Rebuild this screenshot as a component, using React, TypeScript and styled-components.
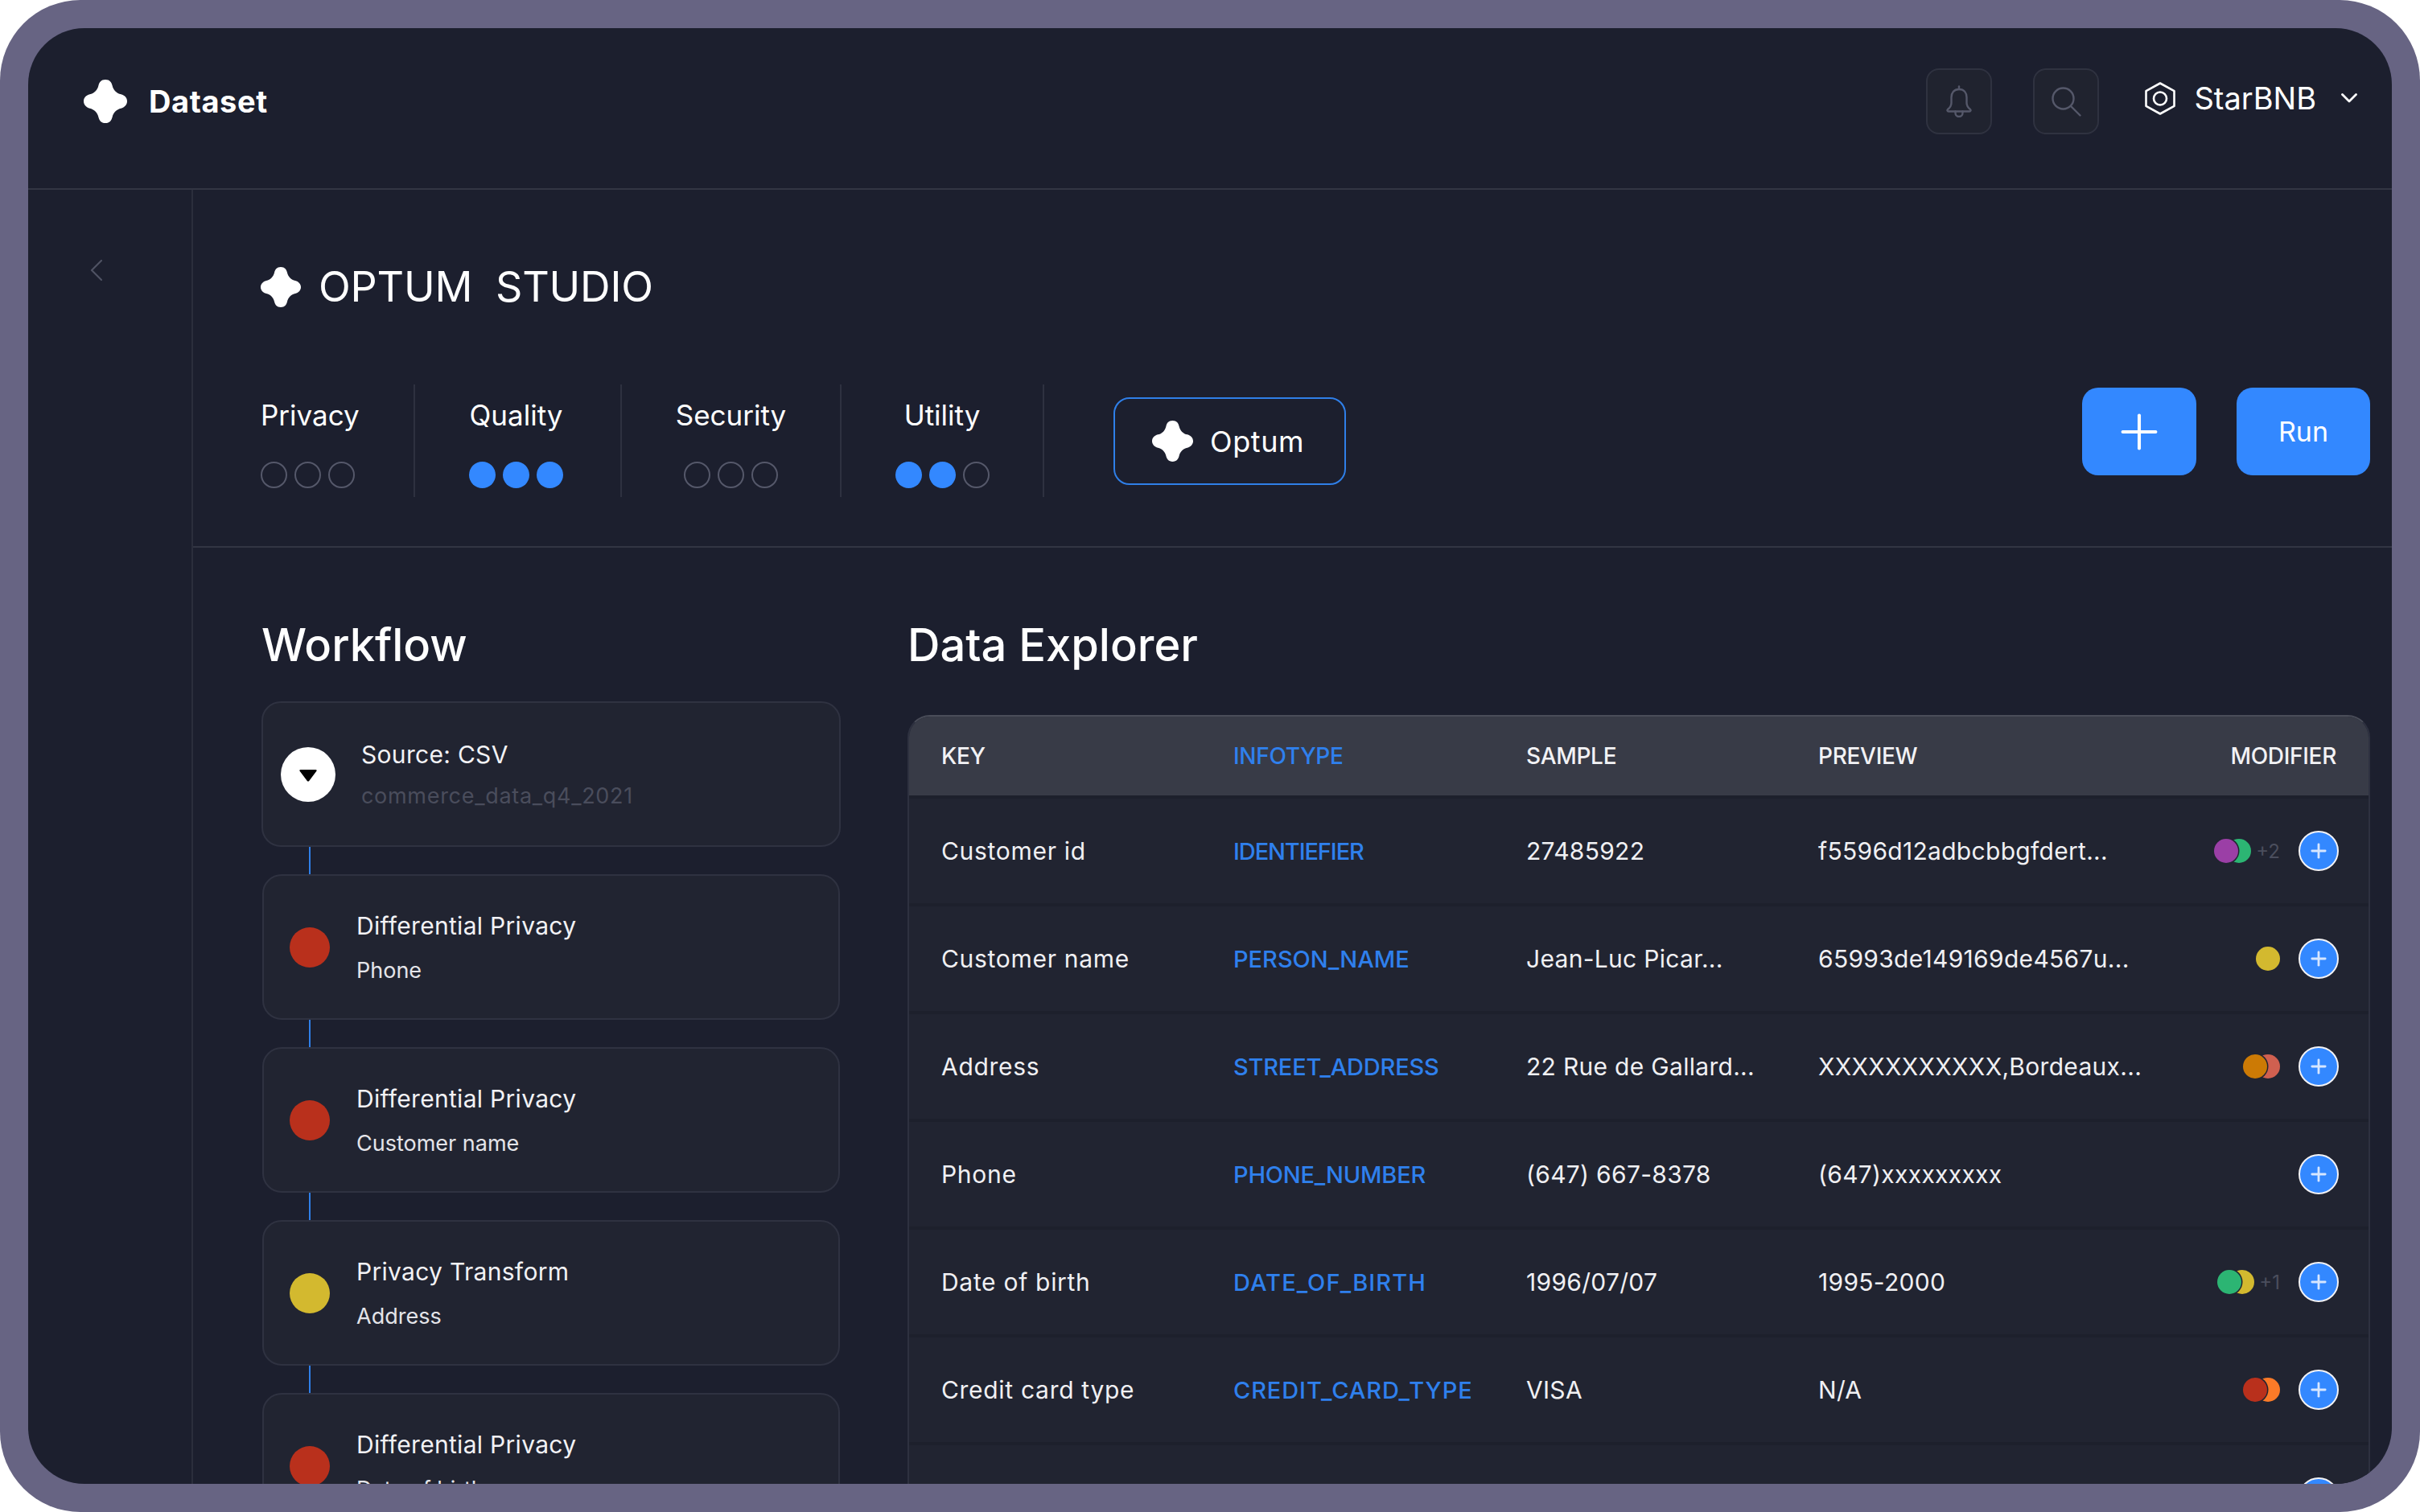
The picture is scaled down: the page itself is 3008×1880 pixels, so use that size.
import styled, { createGlobalStyle } from 'styled-components';
import { Plus } from 'lucide-react';

const GlobalStyle = createGlobalStyle`
  html, body {
    margin: 0;
    padding: 0;
    background: #ffffff;
  }
  * {
    box-sizing: border-box;
  }
`;

const StarMark = ({ size }: { size: number }) => (
  <StarSvg width={size} height={size} viewBox="0 0 100 100">
    <path
      d="M50 0C60 0 64 6 66 14C68 24 76 32 86 34C94 36 100 42 100 50C100 58 94 64 86 66C76 68 68 76 66 86C64 94 60 100 50 100C40 100 36 94 34 86C32 76 24 68 14 66C6 64 0 58 0 50C0 42 6 36 14 34C24 32 32 24 34 14C36 6 40 0 50 0Z"
      fill="#ffffff"
    />
  </StarSvg>
);

const BellIcon = () => (
  <svg width="32" height="40" viewBox="0 0 32 40" fill="none" stroke="#55586a" strokeWidth="2.4" strokeLinejoin="round" strokeLinecap="round">
    <path d="M16 1.5V5" />
    <path d="M16 5C9.5 5 6.5 9.5 6.5 15V22C6.5 26 4.5 28 2 30C1 31 1.5 32.5 3 32.5H29C30.5 32.5 31 31 30 30C27.5 28 25.5 26 25.5 22V15C25.5 9.5 22.5 5 16 5Z" />
    <path d="M11.5 32.5V34.5C11.5 37 13.5 39 16 39C18.5 39 20.5 37 20.5 34.5V32.5" />
  </svg>
);

const SearchIcon = () => (
  <svg width="37" height="37" viewBox="0 0 37 37" fill="none" stroke="#55586a" strokeWidth="2.4" strokeLinecap="round">
    <circle cx="14.5" cy="14.5" r="13" />
    <path d="M24 24L35.5 35.5" />
  </svg>
);

const HexIcon = () => (
  <svg width="38" height="41" viewBox="0 0 38 41" fill="none" stroke="#ffffff" strokeWidth="2.6" strokeLinejoin="round">
    <path d="M19 1.5L36.5 11.2V29.8L19 39.5L1.5 29.8V11.2Z" />
    <circle cx="19" cy="20.5" r="8" />
  </svg>
);

const DownChevron = () => (
  <svg width="20" height="12" viewBox="0 0 20 12" fill="none" stroke="#ffffff" strokeWidth="2.8" strokeLinecap="round" strokeLinejoin="round">
    <path d="M1.5 1.5L10 10L18.5 1.5" />
  </svg>
);

const BackChevron = () => (
  <svg width="15" height="26" viewBox="0 0 15 26" fill="none" stroke="#4f5263" strokeWidth="2.2" strokeLinecap="round" strokeLinejoin="round">
    <path d="M14 1L2 13L14 25" />
  </svg>
);

const metrics = [
  { label: 'Privacy', filled: 0, width: 192, start: true, pad: 0 },
  { label: 'Quality', filled: 3, width: 257, start: false, pad: 4 },
  { label: 'Security', filled: 0, width: 273, start: false, pad: 0 },
  { label: 'Utility', filled: 2, width: 252, start: false, pad: 0 },
];

const steps = [
  { title: 'Differential Privacy', sub: 'Phone', color: '#b9301c' },
  { title: 'Differential Privacy', sub: 'Customer name', color: '#b9301c' },
  { title: 'Privacy Transform', sub: 'Address', color: '#d3b92f' },
  { title: 'Differential Privacy', sub: 'Date of birth', color: '#b9301c' },
];

const rows = [
  { key: 'Customer id', type: 'IDENTIEFIER', tracking: -1.1, sample: '27485922', preview: 'f5596d12adbcbbgfdert...', dots: ['#9b3fa6', '#2cb573'], more: '+2' },
  { key: 'Customer name', type: 'PERSON_NAME', tracking: 0, sample: 'Jean-Luc Picar...', preview: '65993de149169de4567u...', dots: ['#d3b92f'], more: '' },
  { key: 'Address', type: 'STREET_ADDRESS', tracking: -0.2, sample: '22 Rue de Gallard...', preview: 'XXXXXXXXXXX,Bordeaux...', dots: ['#cc7a05', '#d06050'], more: '' },
  { key: 'Phone', type: 'PHONE_NUMBER', tracking: -0.2, sample: '(647) 667-8378', preview: '(647)xxxxxxxxx', dots: [], more: '' },
  { key: 'Date of birth', type: 'DATE_OF_BIRTH', tracking: 1.1, sample: '1996/07/07', preview: '1995-2000', dots: ['#2cb573', '#d3b92f'], more: '+1' },
  { key: 'Credit card type', type: 'CREDIT_CARD_TYPE', tracking: 0.9, sample: 'VISA', preview: 'N/A', dots: ['#b9301c', '#fa7a28'], more: '' },
  { key: '', type: '', tracking: 0, sample: '', preview: '', dots: [], more: '' },
];

const App = () => {
  return (
    <>
      <GlobalStyle />
      <Frame>
        <Screen>
          <TopBar>
            <Brand>
              <StarMark size={54} />
              <BrandName>Dataset</BrandName>
            </Brand>
            <TopActions>
              <IconButton>
                <BellIcon />
              </IconButton>
              <IconButton>
                <SearchIcon />
              </IconButton>
              <OrgSwitch>
                <HexIcon />
                <OrgName>StarBNB</OrgName>
                <DownChevron />
              </OrgSwitch>
            </TopActions>
          </TopBar>
          <Body>
            <Rail>
              <BackChevron />
            </Rail>
            <Main>
              <TitleRow>
                <StarMark size={50} />
                <Title>OPTUM&nbsp; STUDIO</Title>
              </TitleRow>
              <MetricBar>
                {metrics.map((m) => (
                  <Metric key={m.label} $width={m.width} $start={m.start} $pad={m.pad}>
                    <MetricLabel>{m.label}</MetricLabel>
                    <DotRow>
                      {[0, 1, 2].map((i) => (
                        <ScoreDot key={i} $on={i < m.filled} />
                      ))}
                    </DotRow>
                  </Metric>
                ))}
                <OptumButton>
                  <StarMark size={51} />
                  <span>Optum</span>
                </OptumButton>
                <RunActions>
                  <PrimaryButton $width={142}>
                    <Plus size={70} color="#ffffff" strokeWidth={1.4} />
                  </PrimaryButton>
                  <PrimaryButton $width={166}>Run</PrimaryButton>
                </RunActions>
              </MetricBar>
              <Panels>
                <WorkflowPanel>
                  <Heading $gap={40}>Workflow</Heading>
                  <SourceCard>
                    <SourceBadge>
                      <svg width="22" height="15" viewBox="0 0 22 15">
                        <path d="M1.5 0H20.5C21.5 0 22 1 21.4 1.8L12.2 14C11.6 14.8 10.4 14.8 9.8 14L0.6 1.8C0 1 0.5 0 1.5 0Z" fill="#000000" />
                      </svg>
                    </SourceBadge>
                    <CardText $gap={18}>
                      <CardTitle>Source: CSV</CardTitle>
                      <CardSub $muted>commerce_data_q4_2021</CardSub>
                    </CardText>
                  </SourceCard>
                  {steps.map((s, i) => (
                    <div key={i}>
                      <Connector />
                      <StepCard>
                        <StepDot $color={s.color} />
                        <CardText $gap={22}>
                          <CardTitle>{s.title}</CardTitle>
                          <CardSub>{s.sub}</CardSub>
                        </CardText>
                      </StepCard>
                    </div>
                  ))}
                </WorkflowPanel>
                <ExplorerPanel>
                  <Heading $gap={57}>Data Explorer</Heading>
                  <Table>
                    <HeaderRow>
                      <HeadCell>KEY</HeadCell>
                      <HeadCell $accent>INFOTYPE</HeadCell>
                      <HeadCell>SAMPLE</HeadCell>
                      <HeadCell>PREVIEW</HeadCell>
                      <HeadCell>MODIFIER</HeadCell>
                    </HeaderRow>
                    {rows.map((r, i) => (
                      <DataRow key={i}>
                        <KeyCell>{r.key}</KeyCell>
                        <TypeCell $tracking={r.tracking}>{r.type}</TypeCell>
                        <Cell>{r.sample}</Cell>
                        <Cell>{r.preview}</Cell>
                        <ModifierCell>
                          {r.dots.length > 0 && (
                            <DotStack>
                              {r.dots.map((c, j) => (
                                <ModifierDot key={c} $color={c} $front={j === 0 && r.dots.length > 1} />
                              ))}
                            </DotStack>
                          )}
                          {r.more && <MoreCount>{r.more}</MoreCount>}
                          <AddButton>
                            <Plus size={28} color="#d6e6ff" strokeWidth={2.4} />
                          </AddButton>
                        </ModifierCell>
                      </DataRow>
                    ))}
                  </Table>
                </ExplorerPanel>
              </Panels>
            </Main>
          </Body>
        </Screen>
      </Frame>
    </>
  );
};

const Frame = styled.div`
  width: 3008px;
  height: 1880px;
  padding: 35px;
  background-color: #676483;
  border-radius: 100px;
  font-family: Inter, 'Liberation Sans', sans-serif;
  color: #ffffff;
`;

const Screen = styled.div`
  display: flex;
  flex-direction: column;
  height: 100%;
  background-color: #1c1f2e;
  border-radius: 70px;
  overflow: hidden;
`;

const TopBar = styled.header`
  display: flex;
  flex: none;
  align-items: center;
  justify-content: space-between;
  height: 201px;
  padding: 0 43px 17px 69px;
  border-bottom: 2px solid #323543;
`;

const Brand = styled.div`
  display: flex;
  align-items: center;
  gap: 27px;
`;

const StarSvg = styled.svg`
  display: block;
  flex: none;
`;

const BrandName = styled.span`
  font-size: 38px;
  font-weight: 700;
  letter-spacing: 0.6px;
`;

const TopActions = styled.div`
  display: flex;
  align-items: center;
  gap: 51px;
`;

const IconButton = styled.div`
  display: flex;
  align-items: center;
  justify-content: center;
  width: 82px;
  height: 82px;
  background-color: #20232f;
  border: 2px solid #2f3240;
  border-radius: 16px;
`;

const OrgSwitch = styled.div`
  display: flex;
  align-items: center;
  gap: 23px;
  margin-left: 6px;
  padding-bottom: 8px;

  svg:last-child {
    margin-left: 8px;
  }
`;

const OrgName = styled.span`
  font-size: 38px;
  font-weight: 400;
`;

const Body = styled.div`
  display: flex;
  flex: 1;
  min-height: 0;
`;

const Rail = styled.aside`
  flex: none;
  width: 205px;
  padding: 87px 0 0 77px;
  border-right: 2px solid #2b2e3c;
`;

const Main = styled.main`
  display: flex;
  flex: 1;
  flex-direction: column;
  min-width: 0;
`;

const TitleRow = styled.div`
  display: flex;
  flex: none;
  align-items: center;
  gap: 22px;
  height: 50px;
  margin-top: 96px;
  padding-left: 84px;
`;

const Title = styled.h1`
  margin: 0;
  font-size: 52px;
  font-weight: 400;
  line-height: 50px;
  letter-spacing: -0.2px;
`;

const MetricBar = styled.div`
  display: flex;
  flex: none;
  align-items: flex-start;
  height: 299px;
  padding: 96px 27px 0 84px;
  border-bottom: 2px solid #323543;
`;

const Metric = styled.div<{ $width: number; $start: boolean; $pad: number }>`
  display: flex;
  flex-direction: column;
  align-items: ${({ $start }) => ($start ? 'flex-start' : 'center')};
  gap: 40px;
  width: ${({ $width }) => $width}px;
  height: 140px;
  padding: 20px ${({ $pad }) => $pad}px 0 0;
  border-right: 2px solid #2e3140;
`;

const MetricLabel = styled.span`
  font-size: 35px;
  line-height: 36px;
`;

const DotRow = styled.div`
  display: flex;
  gap: 9px;
`;

const ScoreDot = styled.span<{ $on: boolean }>`
  width: 33px;
  height: 33px;
  border-radius: 50%;
  background-color: ${({ $on }) => ($on ? '#3388ff' : 'transparent')};
  border: ${({ $on }) => ($on ? 'none' : '2px solid #55586a')};
`;

const OptumButton = styled.div`
  display: flex;
  align-items: center;
  gap: 21px;
  width: 289px;
  height: 109px;
  margin: 16px 0 0 86px;
  padding-left: 46px;
  border: 2.5px solid #2f7fe8;
  border-radius: 20px;
  font-size: 36px;
  letter-spacing: 0.6px;
`;

const RunActions = styled.div`
  display: flex;
  gap: 50px;
  margin: 4px 0 0 auto;
`;

const PrimaryButton = styled.div<{ $width: number }>`
  display: flex;
  align-items: center;
  justify-content: center;
  width: ${({ $width }) => $width}px;
  height: 109px;
  background-color: #3388ff;
  border-radius: 20px;
  font-size: 34px;
  font-weight: 400;
`;

const Panels = styled.div`
  display: flex;
  flex: 1;
  gap: 83px;
  min-height: 0;
  padding: 91px 27px 0 85px;
  overflow: hidden;
`;

const WorkflowPanel = styled.section`
  flex: none;
  width: 720px;
`;

const ExplorerPanel = styled.section`
  flex: 1;
  min-width: 0;
`;

const Heading = styled.h2<{ $gap: number }>`
  margin: 0 0 ${({ $gap }) => $gap}px;
  font-size: 56px;
  font-weight: 500;
  line-height: 60px;
`;

const SourceCard = styled.div`
  display: flex;
  align-items: center;
  gap: 32px;
  height: 181px;
  padding-left: 22px;
  background-color: #212431;
  border: 2px solid #2f3241;
  border-radius: 24px;
`;

const SourceBadge = styled.div`
  display: flex;
  flex: none;
  align-items: center;
  justify-content: center;
  width: 68px;
  height: 68px;
  padding-top: 4px;
  background-color: #ffffff;
  border-radius: 50%;
`;

const Connector = styled.div`
  width: 2px;
  height: 34px;
  margin-left: 59px;
  background-color: #2f7fe8;
`;

const StepCard = styled.div`
  display: flex;
  align-items: center;
  gap: 33px;
  height: 181px;
  margin: 0 1px;
  padding-left: 32px;
  background-color: #212431;
  border: 2px solid #2f3241;
  border-radius: 24px;
`;

const StepDot = styled.span<{ $color: string }>`
  flex: none;
  width: 50px;
  height: 50px;
  border-radius: 50%;
  background-color: ${({ $color }) => $color};
`;

const CardText = styled.div<{ $gap: number }>`
  display: flex;
  flex-direction: column;
  gap: ${({ $gap }) => $gap}px;
`;

const CardTitle = styled.div`
  font-size: 30px;
  line-height: 36px;
  letter-spacing: 0.3px;
  color: #f2f2f5;
`;

const CardSub = styled.div<{ $muted?: boolean }>`
  font-size: 27px;
  line-height: 32px;
  letter-spacing: ${({ $muted }) => ($muted ? '0.7px' : '0')};
  color: ${({ $muted }) => ($muted ? '#4a4d5c' : '#e4e4e9')};
`;

const Table = styled.div`
  border: 2px solid #2e3140;
  border-bottom: none;
  border-top-color: #4a4d59;
  border-radius: 28px 28px 0 0;
  overflow: hidden;
`;

const HeaderRow = styled.div`
  display: grid;
  grid-template-columns: 363px 364px 363px 1fr auto;
  align-items: center;
  height: 98px;
  padding: 0 40px;
  background-color: #383b47;
`;

const HeadCell = styled.div<{ $accent?: boolean }>`
  font-size: 28px;
  font-weight: 500;
  letter-spacing: -0.3px;
  color: ${({ $accent }) => ($accent ? '#2f80ed' : '#f2f2f5')};
`;

const DataRow = styled.div`
  display: grid;
  grid-template-columns: 363px 364px 363px 1fr auto;
  align-items: center;
  height: 134px;
  padding: 0 37px 0 40px;
  background-color: #212431;
  border-top: 4px solid #1d202c;
`;

const Cell = styled.div`
  font-size: 30px;
  letter-spacing: 0.3px;
  white-space: nowrap;
  color: #f0f0f3;
`;

const KeyCell = styled(Cell)`
  letter-spacing: 0.7px;
`;

const TypeCell = styled(Cell)<{ $tracking: number }>`
  font-size: 29px;
  font-weight: 500;
  letter-spacing: ${({ $tracking }) => $tracking}px;
  color: #2f80ed;
`;

const ModifierCell = styled.div`
  display: flex;
  align-items: center;
  justify-content: flex-end;
`;

const DotStack = styled.div`
  display: flex;
`;

const ModifierDot = styled.span<{ $color: string; $front: boolean }>`
  width: 30px;
  height: 30px;
  border-radius: 50%;
  background-color: ${({ $color }) => $color};
  z-index: ${({ $front }) => ($front ? 1 : 0)};
  box-shadow: ${({ $front }) => ($front ? '0 0 0 1.5px #212431' : 'none')};

  & + & {
    margin-left: -14px;
  }
`;

const MoreCount = styled.span`
  margin-left: 6px;
  font-size: 24px;
  color: #4b4e5d;
`;

const AddButton = styled.div`
  display: flex;
  align-items: center;
  justify-content: center;
  width: 50px;
  height: 50px;
  margin-left: 23px;
  background-color: #3388ff;
  border: 2px solid #f2f2f5;
  border-radius: 50%;
`;

export default App;
